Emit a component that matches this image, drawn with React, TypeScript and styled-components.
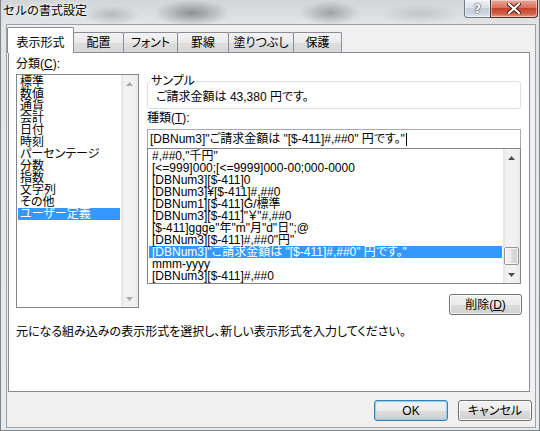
import React from "react";
import styled, { createGlobalStyle } from "styled-components";

const uiFont = `"Liberation Sans", "Noto Sans CJK JP", sans-serif`;

const GlobalStyle = createGlobalStyle`
  html, body { margin: 0; padding: 0; background: #e6e8ea; }
  body {
    font-family: ${uiFont};
    font-size: 12px;
    color: #000;
    font-feature-settings: "palt";
  }
  #root { width: 540px; height: 431px; overflow: hidden; }
`;

const Window = styled.div`
  width: 540px;
  height: 431px;
  box-sizing: border-box;
  display: flex;
  flex-direction: column;
  padding: 0 4px 3px 6px;
  box-shadow: inset 1px 0 0 #7f8489, inset -1px 0 0 #7f8489, inset 0 -1px 0 #7f8489;
  background:
    radial-gradient(ellipse 38px 13px at 192px 13px, rgba(80, 80, 80, 0.55), transparent),
    radial-gradient(ellipse 30px 12px at 330px 13px, rgba(90, 90, 90, 0.45), transparent),
    radial-gradient(ellipse 28px 10px at 112px 15px, rgba(120, 120, 120, 0.35), transparent),
    radial-gradient(ellipse 40px 10px at 420px 14px, rgba(140, 140, 140, 0.3), transparent),
    linear-gradient(to bottom, #d2d4d6, #e2e4e6 24px, #e8eaeb);
`;

const TitleBar = styled.div`
  height: 24px;
  flex: none;
  display: flex;
  justify-content: space-between;
  align-items: flex-start;
`;

const Title = styled.div`
  margin-left: -3px;
  padding-top: 4px;
  font-size: 12px;
  line-height: 14px;
  font-feature-settings: normal;
  color: #000;
  text-shadow: 0 0 6px #fff, 0 0 3px #fff;
`;

const CaptionButtons = styled.div`
  display: flex;
  margin-right: -2px;
`;

type CaptionProps = { $close?: boolean };
const CaptionButton = styled.div<CaptionProps>`
  box-sizing: border-box;
  width: ${p => (p.$close ? 48 : 27)}px;
  height: 18px;
  display: flex;
  align-items: center;
  justify-content: center;
  border: 1px solid ${p => (p.$close ? "#5a2a22" : "#6f7a86")};
  border-top: none;
  border-radius: ${p => (p.$close ? "0 0 4px 0" : "0 0 0 4px")};
  margin-left: ${p => (p.$close ? -1 : 0)}px;
  background: ${p =>
    p.$close
      ? "linear-gradient(#e9a99b, #d9705a 45%, #c7402a 50%, #d0604a 80%, #e79a7f)"
      : "linear-gradient(#eef2f6, #dbe2ea 45%, #c7d0da 50%, #cdd6e0 80%, #e2e8ee)"};
  box-shadow: inset 0 0 0 1px rgba(255, 255, 255, 0.45);
  color: #fff;
  font-family: "DejaVu Sans", sans-serif;
  font-weight: bold;
  font-size: 12px;
  text-shadow: 0 0 2px #333, 0 0 1px #333;
`;

const Client = styled.div`
  flex: 1;
  display: flex;
  flex-direction: column;
  border: 1px solid #9da1a6;
  background: #f0f0f0;
`;

const TabStrip = styled.div`
  margin-top: 2px;
  height: 25px;
  flex: none;
  display: flex;
  align-items: flex-end;
`;

type TabProps = { $active?: boolean; $w: number };
const Tab = styled.div<TabProps>`
  box-sizing: border-box;
  position: relative;
  z-index: ${p => (p.$active ? 1 : 0)};
  width: ${p => p.$w}px;
  height: ${p => (p.$active ? 26 : 20)}px;
  margin-bottom: ${p => (p.$active ? -1 : 0)}px;
  & + & { margin-left: -1px; }
  padding-top: ${p => (p.$active ? 9 : 4)}px;
  text-align: center;
  line-height: 12px;
  white-space: nowrap;
  border: 1px solid #898c95;
  border-bottom: none;
  border-radius: 2px 2px 0 0;
  background: ${p => (p.$active ? "#fff" : "linear-gradient(#f4f4f4, #e9e9e9 50%, #dddddd 51%, #d8d8d8)")};
`;

const Panel = styled.div`
  flex: 1;
  display: flex;
  flex-direction: column;
  margin: 0 5px 0 1px;
  border: 1px solid #898c95;
  background: #fff;
  padding: 5px 6px 0 7px;
`;

const Columns = styled.div`
  display: grid;
  grid-template-columns: 123px 374px;
  column-gap: 8px;
  align-items: start;
`;

const Column = styled.div<{ $padTop?: number }>`
  display: flex;
  flex-direction: column;
  padding-top: ${p => p.$padTop ?? 0}px;
`;

const Label = styled.div<{ $gap?: number; $top?: number }>`
  line-height: 12px;
  white-space: nowrap;
  margin-top: ${p => p.$top ?? 0}px;
  margin-bottom: ${p => p.$gap ?? 0}px;
`;

const ListBox = styled.div<{ $h: number }>`
  box-sizing: border-box;
  height: ${p => p.$h}px;
  display: flex;
  border: 1px solid #828790;
  background: #fff;
`;

const Items = styled.div<{ $pad: number }>`
  flex: 1;
  min-width: 0;
  padding: 1px;
  overflow: hidden;
  & > div { padding-left: ${p => p.$pad}px; }
`;

const Item = styled.div<{ $selected?: boolean }>`
  height: 12px;
  line-height: 12px;
  white-space: nowrap;
  background: ${p => (p.$selected ? "#3399ff" : "transparent")};
  color: ${p => (p.$selected ? "#fff" : "#000")};
`;

const ScrollBar = styled.div`
  width: 17px;
  flex: none;
  display: flex;
  flex-direction: column;
  background: linear-gradient(to right, #e4e4e4, #f3f3f3 25%, #f0f0f0 75%, #e9e9e9);
`;

const ArrowButton = styled.div`
  height: 17px;
  flex: none;
  display: flex;
  align-items: center;
  justify-content: center;
`;

const Track = styled.div`
  flex: 1;
  display: flex;
  flex-direction: column;
`;

const Thumb = styled.div<{ $offset: number; $len: number }>`
  box-sizing: border-box;
  margin: ${p => p.$offset}px 1px 0 1px;
  height: ${p => p.$len}px;
  border: 1px solid #979797;
  border-radius: 2px;
  background: linear-gradient(to right, #f4f4f4, #e9e9e9 45%, #dadada 55%, #d0d0d0);
  box-shadow: inset 0 0 0 1px rgba(255, 255, 255, 0.7);
`;

const SampleBox = styled.fieldset`
  margin: 0;
  min-width: 0;
  padding: 4px 0 5px 8px;
  border: 1px solid #d5dfe5;
  border-radius: 3px;
`;

const Legend = styled.legend`
  margin-left: -6px;
  padding: 0 1px;
  line-height: 12px;
`;

const SampleText = styled.div`
  line-height: 12px;
  white-space: nowrap;
`;

const EditBox = styled.div`
  box-sizing: border-box;
  height: 19px;
  margin-top: 5px;
  padding-left: 2px;
  display: flex;
  align-items: center;
  border: 1px solid #a6abb3;
  border-bottom: none;
  white-space: nowrap;
  line-height: 12px;
`;

const Caret = styled.span`
  display: inline-block;
  width: 1px;
  height: 13px;
  margin-left: 1px;
  background: #000;
`;

const ButtonRow = styled.div<{ $top: number; $right: number }>`
  display: flex;
  justify-content: flex-end;
  gap: 10px;
  margin: ${p => p.$top}px ${p => p.$right}px 0 0;
`;

const Button = styled.div<{ $default?: boolean; $w: number }>`
  box-sizing: border-box;
  width: ${p => p.$w}px;
  height: 21px;
  display: flex;
  align-items: center;
  justify-content: center;
  line-height: 12px;
  border: 1px solid ${p => (p.$default ? "#3c7fb1" : "#707070")};
  border-radius: 3px;
  background: linear-gradient(#f2f2f2, #ebebeb 50%, #dddddd 51%, #cfcfcf);
  box-shadow: ${p =>
    p.$default
      ? "inset 0 0 0 1px rgba(130, 205, 240, 0.8), inset 0 0 3px rgba(150, 215, 245, 0.9)"
      : "inset 0 0 0 1px rgba(255, 255, 255, 0.8)"};
`;

const Description = styled.div`
  margin-top: 11px;
  line-height: 12px;
  white-space: nowrap;
`;

const Footer = styled.div`
  flex: none;
  display: flex;
  justify-content: flex-end;
  gap: 10px;
  padding: 8px 3px 6px 0;
`;

function Arrow({ up, color }: { up?: boolean; color: string }) {
  return (
    <svg width="7" height="4" viewBox="0 0 7 4">
      <path d={up ? "M0 4 L3.5 0 L7 4 Z" : "M0 0 L7 0 L3.5 4 Z"} fill={color} />
    </svg>
  );
}

function Scroll({ disabled, thumb }: { disabled?: boolean; thumb?: { offset: number; len: number } }) {
  const color = disabled ? "#a8a8a8" : "#4d4d4d";
  return (
    <ScrollBar>
      <ArrowButton><Arrow up color={color} /></ArrowButton>
      <Track>{thumb && <Thumb $offset={thumb.offset} $len={thumb.len} />}</Track>
      <ArrowButton><Arrow color={color} /></ArrowButton>
    </ScrollBar>
  );
}

const tabs = [
  { label: "表示形式", w: 67 },
  { label: "配置", w: 51 },
  { label: "フォント", w: 55 },
  { label: "罫線", w: 52 },
  { label: "塗りつぶし", w: 66 },
  { label: "保護", w: 49 },
];

const categories = [
  "標準", "数値", "通貨", "会計", "日付", "時刻", "パーセンテージ",
  "分数", "指数", "文字列", "その他", "ユーザー定義",
];

const formats = [
  '#,##0,"千円"',
  "[<=999]000;[<=9999]000-00;000-0000",
  "[DBNum3][$-411]0",
  "[DBNum3]¥[$-411]#,##0",
  "[DBNum1][$-411]G/標準",
  '[DBNum3][$-411]"￥"#,##0',
  '[$-411]ggge"年"m"月"d"日";@',
  '[DBNum3][$-411]#,##0"円"',
  '[DBNum3]"ご請求金額は "[$-411]#,##0" 円です。"',
  "mmm-yyyy",
  "[DBNum3][$-411]#,##0",
];

export default function App() {
  const selectedFormat = 8;
  return (
    <>
      <GlobalStyle />
      <Window>
        <TitleBar>
          <Title>セルの書式設定</Title>
          <CaptionButtons>
            <CaptionButton>?</CaptionButton>
            <CaptionButton $close>
              <svg width="14" height="11" viewBox="0 0 14 11">
                <path d="M2 1 L12 10 M12 1 L2 10" stroke="#3a1a14" strokeWidth="4" strokeLinecap="square" />
                <path d="M2 1 L12 10 M12 1 L2 10" stroke="#fff" strokeWidth="2.2" strokeLinecap="square" />
              </svg>
            </CaptionButton>
          </CaptionButtons>
        </TitleBar>
        <Client>
          <TabStrip>
            {tabs.map((t, i) => (
              <Tab key={t.label} $w={t.w} $active={i === 0}>{t.label}</Tab>
            ))}
          </TabStrip>
          <Panel>
            <Columns>
              <Column>
                <Label $gap={4}>分類(<u>C</u>):</Label>
                <ListBox $h={234}>
                  <Items $pad={2}>
                    {categories.map((c, i) => (
                      <Item key={c} $selected={i === categories.length - 1}>{c}</Item>
                    ))}
                  </Items>
                  <Scroll disabled />
                </ListBox>
              </Column>
              <Column $padTop={17}>
                <SampleBox>
                  <Legend>サンプル</Legend>
                  <SampleText>ご請求金額は 43,380 円です。</SampleText>
                </SampleBox>
                <Label $top={3}>種類(<u>T</u>):</Label>
                <EditBox>
                  {formats[selectedFormat]}
                  <Caret />
                </EditBox>
                <ListBox $h={136}>
                  <Items $pad={3}>
                    {formats.map((f, i) => (
                      <Item key={f + i} $selected={i === selectedFormat}>{f}</Item>
                    ))}
                  </Items>
                  <Scroll thumb={{ offset: 81, len: 18 }} />
                </ListBox>
                <ButtonRow $top={10} $right={-1}>
                  <Button $w={73}>削除(<u>D</u>)</Button>
                </ButtonRow>
              </Column>
            </Columns>
            <Description>元になる組み込みの表示形式を選択し、新しい表示形式を入力してください。</Description>
          </Panel>
          <Footer>
            <Button $w={74} $default>OK</Button>
            <Button $w={74}>キャンセル</Button>
          </Footer>
        </Client>
      </Window>
    </>
  );
}
